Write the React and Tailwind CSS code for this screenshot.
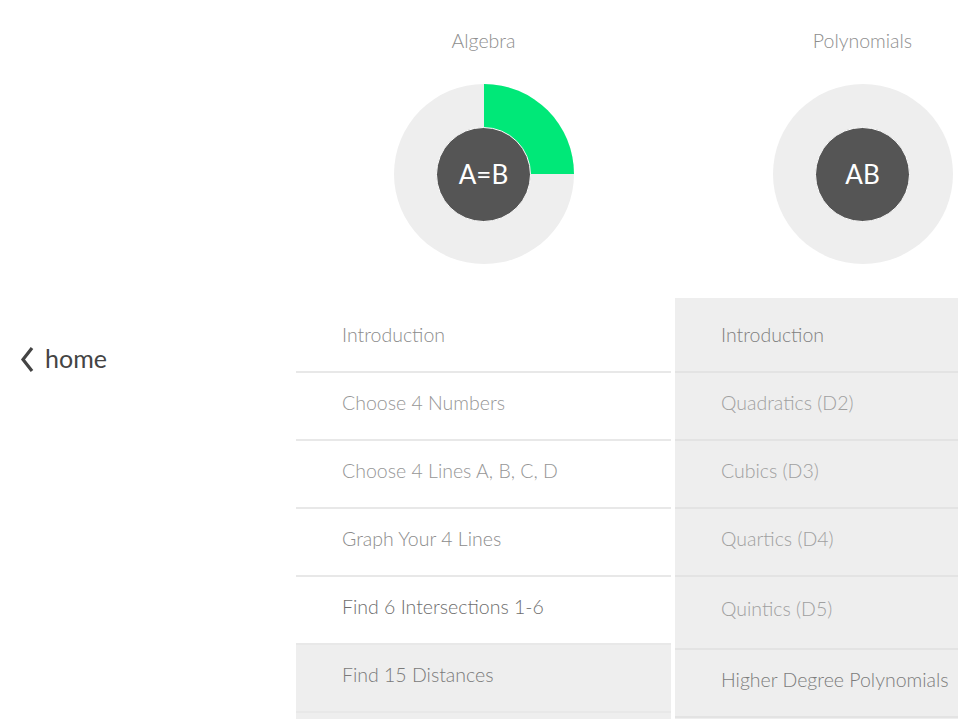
import React from 'react';

const font = { fontFamily: 'Lato, "Noto Sans", "Liberation Sans", sans-serif' };

const algebra = [
  { label: 'Introduction', tone: 'text-[#8c8c8c]' },
  { label: 'Choose 4 Numbers', tone: 'text-[#969696]' },
  { label: 'Choose 4 Lines A, B, C, D', tone: 'text-[#969696]' },
  { label: 'Graph Your 4 Lines', tone: 'text-[#8c8c8c]' },
  { label: 'Find 6 Intersections 1-6', tone: 'text-[#6e6e6e]' },
  { label: 'Find 15 Distances', tone: 'text-[#7a7a7a]', grey: true },
  { label: '', tone: '', grey: true },
];

const polynomials = [
  { label: 'Introduction', tone: 'text-[#808080]' },
  { label: 'Quadratics (D2)', tone: 'text-[#a0a0a0]' },
  { label: 'Cubics (D3)', tone: 'text-[#a0a0a0]' },
  { label: 'Quartics (D4)', tone: 'text-[#a0a0a0]' },
  { label: 'Quintics (D5)', tone: 'text-[#a0a0a0]', tall: true },
  { label: 'Higher Degree Polynomials', tone: 'text-[#7c7c7c]' },
  { label: '', tone: '' },
];

function Progress({ symbol, filled }) {
  return (
    <div className="relative w-[180px] h-[180px]">
      <svg width="180" height="180" viewBox="0 0 180 180" className="absolute inset-0">
        <circle cx="90" cy="90" r="90" fill="#eeeeee" />
        {filled && <path d="M90 90 L90 0 A90 90 0 0 1 180 90 Z" fill="#00e878" />}
      </svg>
      <div className="absolute inset-0 flex items-center justify-center">
        <div className="w-[95px] h-[95px] rounded-full bg-[#555555] border-[1.5px] border-white flex items-center justify-center">
          <span className="text-white text-[26px] leading-none">{symbol}</span>
        </div>
      </div>
    </div>
  );
}

function Column({ title, symbol, filled, rows, greyList }) {
  return (
    <div className="w-[375px] shrink-0 flex flex-col">
      <div className="h-[298px] shrink-0 flex flex-col items-center">
        <div className="mt-[28px] text-[19.5px] font-light leading-[26px] text-[#8e8e8e]">{title}</div>
        <div className="mt-[30px]">
          <Progress symbol={symbol} filled={filled} />
        </div>
      </div>
      <div className={`pt-[7px] flex flex-col shrink-0 ${greyList ? 'bg-[#eeeeee]' : ''}`}>
        {rows.map((row, i) => (
          <div
            key={i}
            className={`${row.tall ? 'h-[73px]' : 'h-[68px]'} shrink-0 flex items-center pl-[46px] pb-[7px] border-b-2 ${
              greyList ? 'border-[#e3e3e3]' : 'border-[#e8e8e8]'
            } ${row.grey ? 'bg-[#eeeeee]' : ''}`}
          >
            <span className={`text-[19.5px] font-light whitespace-nowrap ${row.tone}`}>{row.label}</span>
          </div>
        ))}
      </div>
    </div>
  );
}

export default function App() {
  return (
    <div className="w-[958px] h-[719px] overflow-hidden bg-white flex" style={font}>
      <div className="w-[296px] shrink-0 h-[719px] flex items-center pl-[20px]">
        <div className="flex items-center gap-[11px] text-[#444444]">
          <svg width="14" height="27" viewBox="0 0 14 27">
            <path d="M12 2 L3 13.5 L12 25" fill="none" stroke="#444444" strokeWidth="3.2" strokeLinejoin="miter" />
          </svg>
          <span className="text-[25px] leading-none pb-[3px]">home</span>
        </div>
      </div>
      <div className="flex gap-[4px] items-start">
        <Column title="Algebra" symbol="A=B" filled rows={algebra} />
        <Column title="Polynomials" symbol="AB" rows={polynomials} greyList />
      </div>
    </div>
  );
}
